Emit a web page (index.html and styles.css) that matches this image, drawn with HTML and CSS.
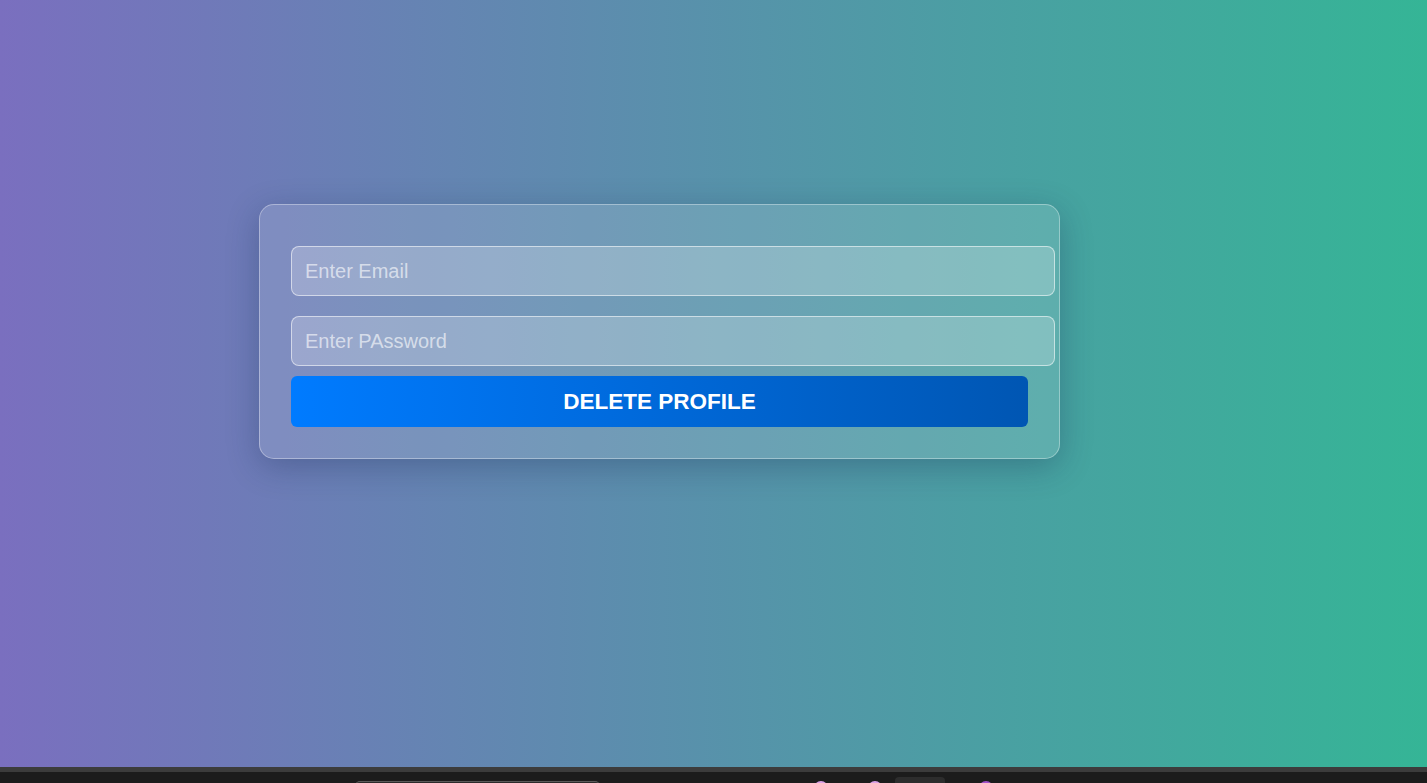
FILE: index.html
```html
<!DOCTYPE html>
<html>
<head>
<meta charset="utf-8">
<link rel="stylesheet" href="styles.css">
</head>
<body>
<main class="stage">
  <form class="card">
    <input class="field" type="email" placeholder="Enter Email">
    <input class="field" type="password" placeholder="Enter PAssword">
    <button class="btn" type="button">DELETE PROFILE</button>
  </form>
</main>
<footer class="taskbar">
  <div class="taskbar-top"></div>
  <div class="taskbar-body">
    <span class="tb-search"></span>
    <span class="tb-dot tb-dot1"></span>
    <span class="tb-dot tb-dot2"></span>
    <span class="tb-app"></span>
    <span class="tb-dot tb-dot3"></span>
  </div>
</footer>
</body>
</html>
```
FILE: styles.css
```css
* { box-sizing: border-box; }
html, body { margin: 0; padding: 0; height: 100%; }
body {
  display: flex;
  flex-direction: column;
  font-family: "Liberation Sans", Arial, sans-serif;
  overflow: hidden;
}
.stage {
  flex: 1;
  background: linear-gradient(to right, #7a6fbf, #35b596);
  padding: 204px 0 0 259px;
}
.card {
  width: 801px;
  height: 255px;
  padding: 41px 31px 0 31px;
  border: 1px solid rgba(255, 255, 255, 0.35);
  border-radius: 15px;
  background: rgba(255, 255, 255, 0.13);
  box-shadow: 0 8px 32px rgba(20, 40, 80, 0.3);
  display: flex;
  flex-direction: column;
  align-items: flex-start;
}
.field {
  width: 764px;
  height: 50px;
  padding: 0 13px;
  border: 1px solid rgba(255, 255, 255, 0.55);
  border-radius: 8px;
  background: rgba(255, 255, 255, 0.22);
  font-family: "Liberation Sans", Arial, sans-serif;
  font-size: 20px;
  color: #fff;
  outline: none;
  margin: 0 0 20px 0;
}
.field + .field { margin-bottom: 10px; }
.field::placeholder { color: rgba(255, 255, 255, 0.62); }
.btn {
  width: 737px;
  height: 51px;
  border: none;
  border-radius: 6px;
  background: linear-gradient(to right, #007bff, #0056b3);
  color: #fff;
  font-family: "Liberation Sans", Arial, sans-serif;
  font-size: 22.5px;
  font-weight: bold;
  cursor: pointer;
}
.taskbar { height: 16px; flex: none; }
.taskbar-top { height: 5px; background: #3c3c3c; }
.taskbar-body {
  height: 11px;
  background: #1c1c1c;
  position: relative;
  overflow: hidden;
}
.tb-search {
  position: absolute;
  left: 355px; top: 9px;
  width: 245px; height: 10px;
  border-radius: 5px;
  background: #2b2b2b;
  border-top: 1px solid #5a5a5a;
}
.tb-dot {
  position: absolute;
  top: 9px;
  width: 14px; height: 14px;
  border-radius: 50%;
  background: #d9a0e6;
}
.tb-dot1 { left: 814px; }
.tb-dot2 { left: 868px; }
.tb-dot3 { left: 979px; background: #a050c8; }
.tb-app {
  position: absolute;
  left: 895px; top: 5px;
  width: 50px; height: 14px;
  border-radius: 4px;
  background: #2d2d2d;
}
```
